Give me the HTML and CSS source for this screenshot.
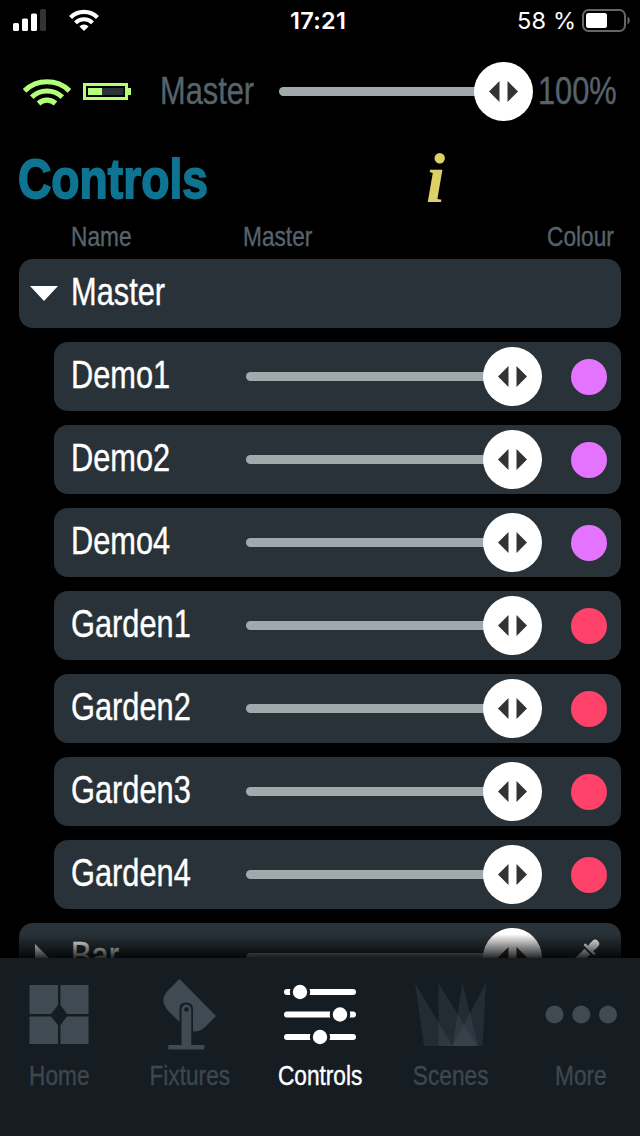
FILE: index.html
```html
<!DOCTYPE html>
<html lang="en">
<head>
<meta charset="utf-8">
<title>Controls</title>
<link rel="stylesheet" href="styles.css">
</head>
<body>
<svg class="defs" aria-hidden="true">
  <symbol id="thumb" viewBox="0 0 59 59">
    <circle cx="29.5" cy="29.5" r="29.5" fill="#fff"/>
    <path d="M25.5 19v21L15 29.500zM33.500 19v21L44 29.500z" fill="#333"/>
  </symbol>
</svg>
<div class="app">
  <div class="status">
    <svg class="signal" width="34" height="22" viewBox="0 0 34 22">
      <rect x="0" y="14" width="6" height="8" rx="1.500" fill="#fff"/>
      <rect x="9" y="9.500" width="6" height="12.500" rx="1.500" fill="#fff"/>
      <rect x="18" y="4.500" width="6" height="17.500" rx="1.500" fill="#fff"/>
      <rect x="27" y="0" width="6" height="22" rx="1.500" fill="#333"/>
    </svg>
    <svg class="wifi" width="30" height="22" viewBox="0 0 30 22">
      <g fill="none" stroke="#fff" stroke-width="4.300">
        <path d="M1.500 8.500a19 19 0 0 1 27 0"/>
        <path d="M6.500 13.800a12 12 0 0 1 17 0" stroke-width="4"/>
      </g>
      <path d="M15 22l-4.600-4.600a6.500 6.500 0 0 1 9.200 0z" fill="#fff"/>
    </svg>
    <span class="time">17:21</span>
    <span class="percent">58 %</span>
    <svg class="battery" width="48" height="23" viewBox="0 0 48 23">
      <rect x="1" y="1" width="42" height="21" rx="5.500" fill="none" stroke="#666" stroke-width="2"/>
      <rect x="4" y="4" width="21" height="15" rx="2.500" fill="#fff"/>
      <path d="M45.500 7.500c3 1.500 3 6.500 0 8z" fill="#666"/>
    </svg>
  </div>

  <div class="master-bar">
    <svg class="link-wifi" width="48" height="28" viewBox="0 0 48 28">
      <g fill="none" stroke="#b3ff78" stroke-width="5.200">
        <path d="M1.500 12.800a32.500 32.500 0 0 1 45 0"/>
        <path d="M8.700 19.200a22 22 0 0 1 30.600 0"/>
        <path d="M15.500 25.500a12.500 12.500 0 0 1 17 0"/>
      </g>
    </svg>
    <svg class="link-battery" width="48" height="17" viewBox="0 0 48 17">
      <rect x="1.500" y="1.500" width="42" height="14" fill="none" stroke="#b3ff78" stroke-width="3"/>
      <path d="M45 5h3v7h-3z" fill="#b3ff78"/>
      <path d="M5 5h14v7H5z" fill="#b3ff78"/>
      <path d="M19 5h21.500v7H19z" fill="#293238"/>
    </svg>
    <span class="master-label"><span class="narrow">Master</span></span>
    <div class="slider slider-top"><svg class="thumb"><use href="#thumb"/></svg></div>
    <span class="master-value"><span class="narrow">100%</span></span>
  </div>

  <div class="heading">
    <h1 class="title">Controls</h1>
    <span class="info">i</span>
  </div>

  <div class="columns">
    <span class="col-name"><span class="narrow">Name</span></span>
    <span class="col-master"><span class="narrow">Master</span></span>
    <span class="col-colour"><span class="narrow">Colour</span></span>
  </div>

  <div class="list">
    <div class="row group">
      <span class="caret"><svg width="28" height="15" viewBox="0 0 28 15"><path d="M0 0h28L14 15z" fill="#fff"/></svg></span>
      <span class="name"><span class="narrow">Master</span></span>
    </div>
    <div class="row child"><span class="name"><span class="narrow">Demo1</span></span><div class="slider"><svg class="thumb"><use href="#thumb"/></svg></div><i class="dot violet"></i></div>
    <div class="row child"><span class="name"><span class="narrow">Demo2</span></span><div class="slider"><svg class="thumb"><use href="#thumb"/></svg></div><i class="dot violet"></i></div>
    <div class="row child"><span class="name"><span class="narrow">Demo4</span></span><div class="slider"><svg class="thumb"><use href="#thumb"/></svg></div><i class="dot violet"></i></div>
    <div class="row child"><span class="name"><span class="narrow">Garden1</span></span><div class="slider"><svg class="thumb"><use href="#thumb"/></svg></div><i class="dot red"></i></div>
    <div class="row child"><span class="name"><span class="narrow">Garden2</span></span><div class="slider"><svg class="thumb"><use href="#thumb"/></svg></div><i class="dot red"></i></div>
    <div class="row child"><span class="name"><span class="narrow">Garden3</span></span><div class="slider"><svg class="thumb"><use href="#thumb"/></svg></div><i class="dot red"></i></div>
    <div class="row child"><span class="name"><span class="narrow">Garden4</span></span><div class="slider"><svg class="thumb"><use href="#thumb"/></svg></div><i class="dot red"></i></div>
    <div class="row group">
      <span class="caret closed"><svg width="15" height="28" viewBox="0 0 15 28"><path d="M0 0v28L14 14z" fill="#fff"/></svg></span>
      <span class="name"><span class="narrow">Bar</span></span>
      <div class="slider"><svg class="thumb"><use href="#thumb"/></svg></div>
      <svg class="dropper" width="36" height="40" viewBox="0 0 36 40">
        <g transform="translate(17.500 11.500) rotate(45)" fill="#fff">
          <rect x="-4" y="-12" width="8" height="12" rx="4"/>
          <rect x="-7.500" y="-1.500" width="15" height="2.600" rx="1"/>
          <path d="M-4 3h8v17l-4 7-4-7z"/>
        </g>
      </svg>
    </div>
    <div class="fade"></div>
  </div>

  <nav class="tabs">
    <div class="tab">
      <svg width="80" height="74" viewBox="0 0 80 74" fill="#3f4a53">
        <path d="M10.500 7H39v20l-7 9H10.500zM41.500 7H69.500v29H48l-6.500-9zM10.500 38.500H32l7 8.500v19H10.500zM48 38.500h21.500V66h-28V47z"/>
      </svg>
      <span class="narrow">Home</span>
    </div>
    <div class="tab">
      <svg width="80" height="74" viewBox="0 0 80 74">
        <path d="M29.500 1L66 38 54.500 49.500Q50 54 43 53.500V31q0-6.500-6.800-6.500T29.500 31v13L18 32.500Q9 22 17.500 13z" fill="#3f4a53"/>
        <path d="M31.500 67V31.500a4.900 4.900 0 0 1 9.800 0V67h13v4.500h-36V67z" fill="#3f4a53"/>
        <circle cx="36.400" cy="31.500" r="2.200" fill="#151c22"/>
      </svg>
      <span class="narrow">Fixtures</span>
    </div>
    <div class="tab active">
      <svg width="80" height="74" viewBox="0 0 80 74">
        <path d="M7 14h66M7 36.500h66M7 59h66" stroke="#fff" stroke-width="6" stroke-linecap="round"/>
        <g fill="#fff" stroke="#151c22" stroke-width="3">
          <circle cx="20" cy="14" r="8.700"/><circle cx="60" cy="36.500" r="8.700"/><circle cx="40" cy="59" r="8.700"/>
        </g>
      </svg>
      <span class="narrow">Controls</span>
    </div>
    <div class="tab">
      <svg width="80" height="74" viewBox="0 0 80 74" fill="#53616b" fill-opacity=".24">
        <path d="M5 5l37.500 63H14z"/><path d="M28.500 5L67 68H28.500z"/><path d="M52.500 5L68 68H42.500z"/><path d="M76 5l-3.500 63h-30z"/>
      </svg>
      <span class="narrow">Scenes</span>
    </div>
    <div class="tab">
      <svg width="80" height="74" viewBox="0 0 80 74" fill="#3f4a53">
        <circle cx="13.500" cy="36.500" r="9"/><circle cx="40.300" cy="36.500" r="9"/><circle cx="67" cy="36.500" r="9"/>
      </svg>
      <span class="narrow">More</span>
    </div>
  </nav>
</div>
</body>
</html>
```

FILE: styles.css
```css
* { box-sizing: border-box; }
body { margin: 0; background: #000; }
svg { display: block; flex: none; }
.defs { position: absolute; width: 0; height: 0; }

.app {
  width: 640px;
  height: 1136px;
  display: flex;
  flex-direction: column;
  overflow: hidden;
  background: #000;
  color: #fff;
  font-family: "Liberation Sans", Arial, sans-serif;
}

/* Condensed lettering */
.narrow {
  display: inline-block;
  white-space: nowrap;
  transform: scaleX(.81);
  transform-origin: left center;
  -webkit-text-stroke: .4px currentColor;
}

.status {
  height: 40px;
  flex: none;
  display: flex;
  align-items: center;
  padding-left: 13px;
  font-family: Inter, sans-serif;
  font-size: 23.500px;
}
.wifi { margin-left: 22px; }
.time { width: 62px; margin-left: 191px; font-weight: 600; letter-spacing: .3px; }
.percent { width: 62px; margin-left: 165px; white-space: nowrap; letter-spacing: .2px; }
.battery { margin-left: 3px; }

.master-bar {
  height: 103px;
  flex: none;
  display: flex;
  align-items: center;
  padding-left: 23px;
  color: #56636c;
  font-size: 38px;
}
.link-battery { margin-left: 12px; }
.master-label { width: 119px; margin-left: 29px; }
.master-value { margin-left: 5px; }

.slider {
  width: 296px;
  height: 59px;
  flex: none;
  display: flex;
  align-items: center;
  justify-content: flex-end;
  background: linear-gradient(#a2a9ad, #a2a9ad) left center / 266px 9px no-repeat;
}
.slider::before {
  content: "";
  flex: 1;
  height: 9px;
  margin-right: -20px;
  border-radius: 5px;
  background: #a2a9ad;
}
.slider { background: none; }
.slider-top { width: 254px; }
.thumb { width: 59px; height: 59px; }

.heading { height: 72px; flex: none; display: flex; align-items: center; }
.title {
  width: 408px;
  margin: 0 0 0 18px;
  font-size: 55px;
  line-height: 72px;
  color: #0e7492;
  -webkit-text-stroke: 1.800px #0e7492;
  transform: scaleX(.84);
  transform-origin: left center;
}
.info {
  color: #dfcf68;
  font: italic bold 69px/72px "Liberation Serif", serif;
}

.columns {
  height: 44px;
  flex: none;
  display: grid;
  grid-template-columns: 172px 304px 80px;
  padding-left: 71px;
  align-items: center;
  color: #56636c;
  font-size: 28px;
  line-height: 40px;
}

.list {
  position: relative;
  height: 699px;
  flex: none;
  display: flex;
  flex-direction: column;
  gap: 14px;
  padding: 0 19px;
  overflow: hidden;
}
.row {
  height: 69px;
  flex: none;
  display: flex;
  align-items: center;
  border-radius: 14px;
  background: #283238;
  font-size: 38px;
}
.child { margin-left: 35px; padding-left: 17px; }
.caret { width: 52px; padding-left: 11px; }
.closed { padding-left: 16px; }
.name { width: 175px; line-height: 65px; padding-bottom: 2px; }
.dot { width: 36px; height: 36px; margin-left: 29px; border-radius: 50%; }
.violet { background: #e474ff; }
.red { background: #ff426a; }
.dropper { margin-left: 30px; }
.fade {
  position: absolute;
  inset: auto 0 0;
  height: 24px;
  background: linear-gradient(transparent, rgba(0, 0, 0, .85));
}

.tabs {
  height: 178px;
  flex: none;
  display: grid;
  grid-template-columns: repeat(5, 130.400px);
  justify-content: center;
  padding-top: 20px;
  background: #151c22;
  color: #3c474f;
  font-size: 28px;
}
.tab { display: flex; flex-direction: column; align-items: center; }
.tab .narrow { margin-top: 8px; transform-origin: center; }
.active { color: #fff; }
```
